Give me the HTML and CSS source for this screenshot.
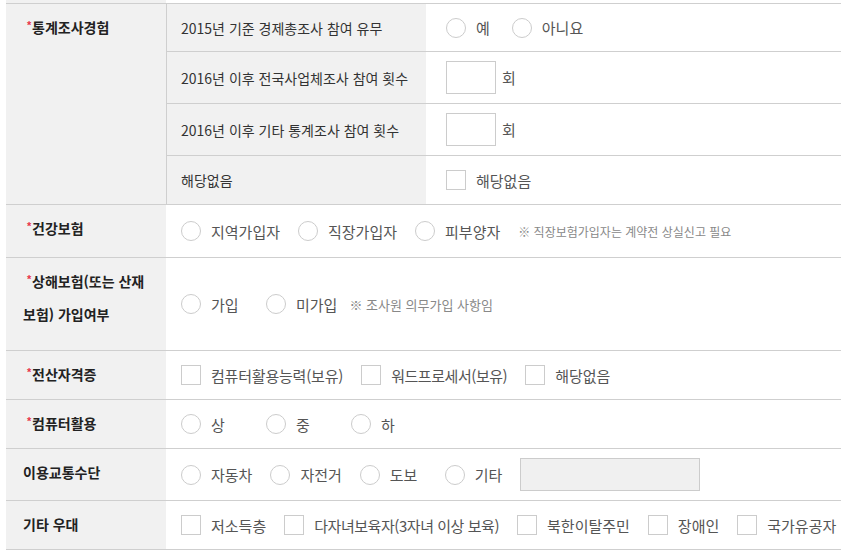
FILE: index.html
```html
<!DOCTYPE html>
<html lang="ko">
<head>
<meta charset="utf-8">
<title>form</title>
<link rel="stylesheet" href="styles.css">
</head>
<body>
<div class="form">
  <div class="lead"><div class="lead-th"></div></div>

  <div class="row">
    <div class="th"><span class="req">*</span>통계조사경험</div>
    <div class="subs">
      <div class="sub h47">
        <div class="sub-th">2015년 기준 경제총조사 참여 유무</div>
        <div class="sub-td">
          <label class="opt tight"><span class="radio"></span><span class="lbl">예</span></label>
          <label class="opt tight"><span class="radio"></span><span class="lbl">아니요</span></label>
        </div>
      </div>
      <div class="sub h52">
        <div class="sub-th">2016년 이후 전국사업체조사 참여 횟수</div>
        <div class="sub-td"><span class="num"></span><span class="lbl">회</span></div>
      </div>
      <div class="sub h52">
        <div class="sub-th">2016년 이후 기타 통계조사 참여 횟수</div>
        <div class="sub-td"><span class="num"></span><span class="lbl">회</span></div>
      </div>
      <div class="sub h49">
        <div class="sub-th">해당없음</div>
        <div class="sub-td">
          <label class="opt tight"><span class="check"></span><span class="lbl">해당없음</span></label>
        </div>
      </div>
    </div>
  </div>

  <div class="row">
    <div class="th"><span class="req">*</span>건강보험</div>
    <div class="td h52">
      <label class="opt"><span class="radio"></span><span class="lbl">지역가입자</span></label>
      <label class="opt"><span class="radio"></span><span class="lbl">직장가입자</span></label>
      <label class="opt"><span class="radio"></span><span class="lbl">피부양자</span></label>
      <span class="note">※ 직장보험가입자는 계약전 상실신고 필요</span>
    </div>
  </div>

  <div class="row">
    <div class="th"><span class="req">*</span>상해보험(또는 산재<br>보험) 가입여부</div>
    <div class="td h92">
      <label class="opt"><span class="radio"></span><span class="lbl">가입</span></label>
      <label class="opt"><span class="radio"></span><span class="lbl">미가입</span></label>
      <span class="note note-close">※ 조사원 의무가입 사항임</span>
    </div>
  </div>

  <div class="row">
    <div class="th"><span class="req">*</span>전산자격증</div>
    <div class="td">
      <label class="opt"><span class="check"></span><span class="lbl lbl-s">컴퓨터활용능력(보유)</span></label>
      <label class="opt"><span class="check"></span><span class="lbl lbl-n">워드프로세서(보유)</span></label>
      <label class="opt"><span class="check"></span><span class="lbl">해당없음</span></label>
    </div>
  </div>

  <div class="row">
    <div class="th"><span class="req">*</span>컴퓨터활용</div>
    <div class="td">
      <label class="opt"><span class="radio"></span><span class="lbl">상</span></label>
      <label class="opt"><span class="radio"></span><span class="lbl">중</span></label>
      <label class="opt"><span class="radio"></span><span class="lbl">하</span></label>
    </div>
  </div>

  <div class="row">
    <div class="th">이용교통수단</div>
    <div class="td h51">
      <label class="opt"><span class="radio"></span><span class="lbl">자동차</span></label>
      <label class="opt"><span class="radio"></span><span class="lbl">자전거</span></label>
      <label class="opt"><span class="radio"></span><span class="lbl">도보</span></label>
      <label class="opt free"><span class="radio"></span><span class="lbl">기타</span></label>
      <span class="etc"></span>
    </div>
  </div>

  <div class="row">
    <div class="th">기타 우대</div>
    <div class="td">
      <label class="opt"><span class="check"></span><span class="lbl">저소득층</span></label>
      <label class="opt"><span class="check"></span><span class="lbl lbl-n">다자녀보육자(3자녀 이상 보육)</span></label>
      <label class="opt"><span class="check"></span><span class="lbl">북한이탈주민</span></label>
      <label class="opt"><span class="check"></span><span class="lbl">장애인</span></label>
      <label class="opt"><span class="check"></span><span class="lbl">국가유공자</span></label>
    </div>
  </div>
</div>
</body>
</html>
```

FILE: styles.css
```css
* {
  box-sizing: border-box;
  margin: 0;
  padding: 0;
}

body {
  margin: 0;
  background: #fff;
  font-family: "Noto Sans CJK KR", "Noto Sans", sans-serif;
  font-size: 14px;
  color: #333;
}

.form {
  margin-left: 6px;
}

.lead {
  height: 3px;
}

.lead-th {
  width: 160px;
  height: 3px;
  background: #f1f1f1;
}

.row {
  display: grid;
  grid-template-columns: 160px 1fr;
  border-top: 1px solid #cfcfcf;
}

.row:last-child {
  border-bottom: 1px solid #cfcfcf;
}

.th {
  background: #f1f1f1;
  padding: 7px 0 0 17px;
  font-weight: 700;
  color: #222;
  line-height: 33px;
}

.req {
  display: inline-block;
  width: 5px;
  margin-left: 4px;
  color: #e8344a;
  font-family: "Liberation Sans", sans-serif;
  font-size: 11px;
  font-weight: 700;
  line-height: 1;
  vertical-align: 4px;
}

.td {
  display: flex;
  align-items: center;
  padding: 0 15px;
  min-height: 48px;
}

.subs {
  display: flex;
  flex-direction: column;
}

.sub {
  display: grid;
  grid-template-columns: 260px 1fr;
}

.sub + .sub {
  border-top: 1px solid #cfcfcf;
}

.sub-th {
  display: flex;
  align-items: center;
  background: #f1f1f1;
  border-left: 1px solid #cfcfcf;
  padding-left: 14px;
  color: #333;
}

.sub-td {
  display: flex;
  align-items: center;
  padding-left: 20px;
}

.h47 { min-height: 47px; }
.h49 { min-height: 49px; }
.h51 { min-height: 51px; }
.h52 { min-height: 52px; }
.h92 { min-height: 92px; }

.opt {
  display: flex;
  align-items: center;
  min-width: 67px;
  margin-right: 18px;
}

.opt.tight {
  min-width: 0;
  margin-right: 22px;
}

.opt.free {
  min-width: 0;
}

.radio {
  flex: none;
  width: 20px;
  height: 20px;
  border: 1px solid #cccccc;
  border-radius: 50%;
  background: #fff;
  margin-right: 10px;
}

.check {
  flex: none;
  width: 20px;
  height: 20px;
  border: 1px solid #cccccc;
  background: #fff;
  margin-right: 10px;
}

.lbl {
  font-size: 15px;
  color: #555;
  white-space: nowrap;
}

.lbl-s {
  letter-spacing: -0.2px;
}

.lbl-n {
  letter-spacing: -0.45px;
}

.num {
  flex: none;
  width: 50px;
  height: 33px;
  border: 1px solid #cccccc;
  background: #fff;
  margin-right: 6px;
}

.etc {
  flex: none;
  width: 180px;
  height: 33px;
  border: 1px solid #cccccc;
  background: #f0f0f0;
}

.note {
  font-size: 12px;
  color: #888;
  white-space: nowrap;
}

.note-close {
  font-size: 13px;
  margin-left: -6px;
}
```
